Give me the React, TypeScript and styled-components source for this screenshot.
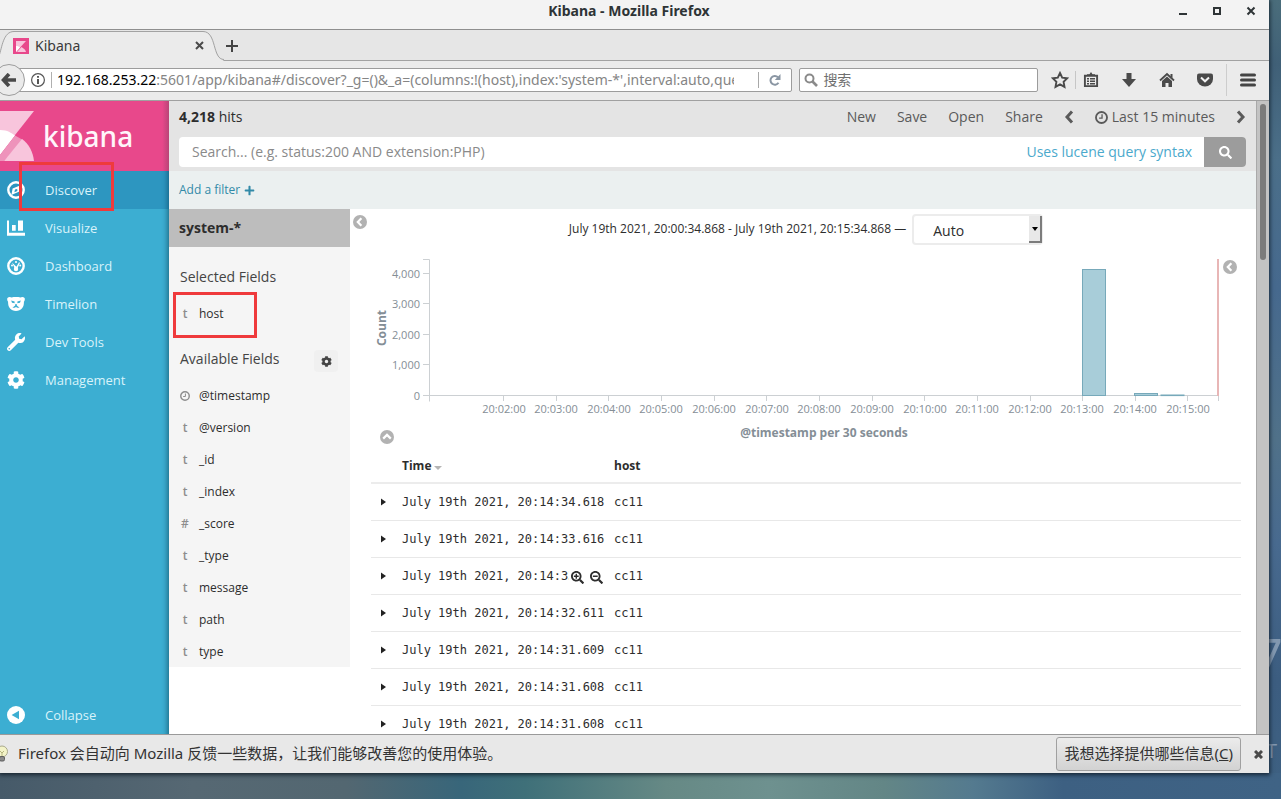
import React from "react";
import styled, { createGlobalStyle, css } from "styled-components";
import {
  FaPlus,
  FaCog,
  FaSearch,
  FaSearchPlus,
  FaSearchMinus,
  FaWrench,
} from "react-icons/fa";

const uiFont = `"Open Sans", "Noto Sans CJK SC", sans-serif`;
const chromeFont = `"Noto Sans", "Noto Sans CJK SC", sans-serif`;

const GlobalStyle = createGlobalStyle`
  * { box-sizing: border-box; }
  body { margin: 0; font-family: ${uiFont}; color: #2d2d2d; }
  button, input, select { font-family: inherit; color: inherit; margin: 0; }
  button { border: 0; background: none; padding: 0; cursor: pointer; }
  a { text-decoration: none; }
  svg { display: block; }
`;

/* ---------- desktop and window ---------- */

const Desktop = styled.div`
  position: relative;
  display: flex;
  height: 100vh;
  padding: 0 12px 26px 0;
  overflow: hidden;
  background:
    linear-gradient(90deg, #465a69 0%, #566873 15%, #536771 27%, #38667a 36%, #3f7079 41%, #668985 52%, #6e918f 60%, #638686 69%, #547a8f 76%, #3d6082 83%, #3f6385 100%)
      bottom / 100% 26px no-repeat,
    linear-gradient(180deg, #4a6d7b 0%, #406077 8%, #4b6f89 20%, #46698e 36%, #507189 55%, #486a8f 68%, #3c5d80 85%, #3e6182 100%);
`;

const DesktopText = styled.span<{ $top: number; $size: number; $right: number }>`
  position: absolute;
  top: ${(p) => p.$top}px;
  right: ${(p) => p.$right}px;
  font: 400 ${(p) => p.$size}px/1 ${uiFont};
  color: #8298b0;
`;

const BrowserWindow = styled.div`
  position: relative;
  display: flex;
  flex: 1;
  flex-direction: column;
  min-width: 0;
  background: #e8e8e8;
  box-shadow: 0 1px 4px 1px rgba(10, 20, 30, 0.75);
`;

const TitleBar = styled.header`
  position: relative;
  display: flex;
  align-items: center;
  justify-content: flex-end;
  height: 30px;
  padding: 0 13px 8px 0;
  background: #f3f3f3;
  border-bottom: 1px solid #8e8e8e;
`;

const WindowTitle = styled.h1`
  flex: 1;
  margin: 0;
  padding-left: 80px;
  text-align: center;
  font: 700 14px/22px ${chromeFont};
  color: #2e3436;
`;

const WindowButtons = styled.div`
  display: flex;
  gap: 24px;
`;

const TabStrip = styled.div`
  display: flex;
  align-items: center;
  height: 31px;
  background: #e6e6e6;
  border-bottom: 1px solid #a2a2a2;
  font: 14px/20px ${chromeFont};
`;

const Tab = styled.div`
  position: relative;
  display: flex;
  align-items: center;
  width: 222px;
  height: 31px;
  padding: 1px 0 0 13px;
  color: #3a3a3a;
`;

const TabShape = styled.svg`
  position: absolute;
  top: 0;
  left: 0;
`;

const TabLabel = styled.span`
  position: relative;
  flex: 1;
  margin-left: 6px;
`;

const TabClose = styled.button`
  position: relative;
  margin-right: 18px;
`;

const Favicon = styled.svg`
  position: relative;
`;

const NewTab = styled.button`
  margin: 1px 0 0 4px;
`;

const NavBar = styled.div`
  display: flex;
  align-items: center;
  height: 40px;
  padding: 0 13px 2px 0;
  background: #ebebeb;
  border-bottom: 1px solid #a0a0a0;
  font: 14px/20px ${chromeFont};
`;

const BackButton = styled.button`
  position: relative;
  display: flex;
  align-items: center;
  justify-content: center;
  width: 32px;
  height: 32px;
  margin: 0 -8px 0 -7px;
  border: 1px solid #9d9d9d;
  border-radius: 50%;
  background: #ebebeb;
`;

const UrlBox = styled.div`
  display: flex;
  flex: 1;
  align-items: center;
  height: 24px;
  min-width: 0;
  padding: 0 9px 0 13px;
  background: #fff;
  border: 1px solid #9c9c9c;
  border-radius: 2px;
`;

const UrlInfo = styled.svg`
  flex: none;
  margin-right: 6px;
`;

const Divider = styled.span<{ $h: number; $c: string }>`
  flex: none;
  width: 1px;
  height: ${(p) => p.$h}px;
  background: ${(p) => p.$c};
`;

const HostLabel = styled.label`
  margin-left: 5px;
  color: #000;
`;

const plainInput = css`
  flex: 1;
  min-width: 0;
  padding: 0;
  border: 0;
  outline: 0;
  background: transparent;
`;

const UrlInput = styled.input`
  ${plainInput}
  height: 22px;
  margin-right: 24px;
  font: inherit;
  color: #858585;
`;

const ReloadButton = styled.button`
  margin-left: 9px;
`;

const BrowserSearch = styled.label`
  display: flex;
  flex: none;
  align-items: center;
  gap: 5px;
  width: 19%;
  max-width: 240px;
  height: 24px;
  margin-left: 7px;
  padding: 0 4px;
  background: #fff;
  border: 1px solid #9c9c9c;
  border-radius: 2px;
`;

const BrowserSearchInput = styled.input`
  ${plainInput}
  font: inherit;
  &::placeholder { color: #6f6f6f; opacity: 1; }
`;

const ToolButtons = styled.div`
  display: flex;
  align-items: center;
  margin-left: 13px;
`;

const ToolButton = styled.button<{ $gap?: number }>`
  margin-right: ${(p) => p.$gap ?? 22}px;
`;

/* ---------- page ---------- */

const Page = styled.div`
  position: relative;
  display: flex;
  flex: 1;
  min-height: 0;
  overflow: hidden;
  background: #fff;
`;

const SideNav = styled.nav`
  display: flex;
  flex: none;
  flex-direction: column;
  width: 169px;
  background: #3caed2;
  box-shadow: inset -6px 0 5px -4px rgba(0, 40, 60, 0.45);
`;

const Brand = styled.div`
  display: flex;
  align-items: center;
  height: 70px;
  background: linear-gradient(90deg, #e8488b 96%, #b94577 100%);
`;

const BrandName = styled.span`
  margin-left: 7px;
  font: 500 28px/40px "Noto Sans", sans-serif;
  color: #fff5fa;
`;

const NavItem = styled.a<{ $active?: boolean; $last?: boolean }>`
  display: flex;
  align-items: center;
  gap: 20px;
  height: 38px;
  margin-top: ${(p) => (p.$last ? "auto" : "0")};
  padding-left: 7px;
  font-size: 13px;
  line-height: 20px;
  color: #d9f3fa;
  background: ${(p) => (p.$active ? "rgba(0, 80, 140, 0.25)" : "transparent")};
  svg { color: #fff; }
`;

const Main = styled.main`
  display: flex;
  flex: 1;
  flex-direction: column;
  min-width: 0;
`;

const TopBar = styled.div`
  flex: none;
  padding: 0 10px 4px;
  background: #e4e4e4;
`;

const MenuRow = styled.div`
  display: flex;
  align-items: center;
  height: 36px;
  padding-bottom: 4px;
  font-size: 14px;
  line-height: 20px;
`;

const Hits = styled.div`
  flex: 1;
`;

const MenuItems = styled.div`
  display: flex;
  align-items: center;
  gap: 21px;
  color: #5a5a5a;
`;

const MenuButton = styled.button`
  display: flex;
  align-items: center;
  gap: 4px;
  font-size: 14px;
  line-height: 20px;
`;

const QueryBar = styled.form`
  display: flex;
  height: 30px;
  border-radius: 4px;
  background: #fff;
  overflow: hidden;
`;

const QueryInput = styled.input`
  ${plainInput}
  padding: 0 0 2px 13px;
  font-size: 14px;
  &::placeholder { color: #8a8a8a; opacity: 1; }
`;

const SyntaxLink = styled.a`
  margin-right: 12px;
  font-size: 14px;
  line-height: 30px;
  color: #4ba9cc;
`;

const QueryButton = styled.button`
  display: flex;
  align-items: center;
  justify-content: center;
  width: 42px;
  background: #9c9c9c;
  color: #fff;
`;

const FilterBar = styled.div`
  display: flex;
  flex: none;
  align-items: center;
  height: 38px;
  padding-left: 10px;
  background: #ebf0f0;
`;

const AddFilter = styled.button`
  display: flex;
  align-items: center;
  gap: 4px;
  font-size: 12px;
  line-height: 20px;
  color: #328aa8;
`;

const Workspace = styled.div`
  display: flex;
  flex: 1;
  align-items: flex-start;
  min-height: 0;
`;

const FieldsPanel = styled.aside`
  flex: none;
  width: 181px;
  background: #f5f5f5;
`;

const IndexPattern = styled.h2`
  margin: 0;
  padding: 0 10px;
  font-size: 14px;
  line-height: 38px;
  background: #bdbdbd;
`;

const FieldsHeading = styled.div`
  display: flex;
  align-items: center;
  height: 50px;
  padding: 10px 12px 0 11px;
  h3 {
    flex: 1;
    margin: 0;
    font-size: 14px;
    font-weight: 400;
    line-height: 20px;
    color: #444;
  }
`;

const SettingsButton = styled.button`
  display: flex;
  align-items: center;
  justify-content: center;
  width: 24px;
  height: 22px;
  margin-top: 4px;
  border-radius: 4px;
  background: #f0f0f0;
  color: #444;
`;

const FieldList = styled.ul`
  margin: 0;
  padding: 0;
  list-style: none;
`;

const Field = styled.li`
  display: flex;
  align-items: center;
  height: 32px;
  padding: 2px 0 0 10px;
  font-size: 12px;
  line-height: 20px;
`;

const FieldType = styled.span`
  display: flex;
  justify-content: center;
  width: 12px;
  margin-right: 8px;
  font-weight: 600;
  color: #8d8d8d;
`;

const Results = styled.section`
  position: relative;
  flex: 1;
  min-width: 0;
  padding: 0 15px 0 21px;
`;

const Round = styled.button`
  display: flex;
  align-items: center;
  justify-content: center;
  width: 14px;
  height: 14px;
  border-radius: 50%;
  background: #b2b2b2;
  color: #fff;
`;

const PanelToggle = styled(Round)<{ $top: number; $side: "left" | "right" }>`
  position: absolute;
  top: ${(p) => p.$top}px;
  ${(p) => (p.$side === "left" ? "left: 3px" : "right: 19px")};
`;

const RangeRow = styled.div`
  display: flex;
  align-items: center;
  justify-content: center;
  gap: 6px;
  height: 41px;
  font-size: 12px;
  line-height: 20px;
`;

const RangeText = styled.span`
  padding-bottom: 2px;
`;

const SelectBox = styled.div`
  position: relative;
  width: 131px;
  height: 31px;
`;

const IntervalSelect = styled.select`
  width: 100%;
  height: 100%;
  padding: 2px 0 0 19px;
  appearance: none;
  border: 2px solid #ececec;
  border-radius: 4px;
  background: #fff;
  font-size: 14px;
`;

const SelectArrow = styled.span`
  position: absolute;
  top: 2px;
  right: 1px;
  display: flex;
  align-items: center;
  justify-content: center;
  width: 13px;
  height: 27px;
  background: #e8e8e8;
  border-right: 2px solid #7c7c7c;
  border-bottom: 2px solid #7c7c7c;
  pointer-events: none;
`;

const Chart = styled.svg`
  width: 100%;
  height: auto;
  font-family: ${uiFont};
  font-size: 11px;
  fill: #848e96;
`;

const ChartFooter = styled.div`
  display: flex;
  align-items: flex-start;
  height: 22px;
  padding-left: 9px;
`;

const CollapseChart = styled(Round)`
  margin-top: 3px;
`;

const AxisTitle = styled.div`
  flex: 1;
  padding-left: 13px;
  text-align: center;
  font-size: 12px;
  font-weight: 700;
  line-height: 12px;
  color: #848e96;
`;

const DocTable = styled.table`
  width: 100%;
  border-collapse: collapse;
  table-layout: fixed;
  th {
    height: 34px;
    padding: 0;
    border-bottom: 2px solid #ececec;
    text-align: left;
    font-size: 12px;
    line-height: 20px;
  }
  td {
    position: relative;
    height: 37px;
    padding: 0;
    border-bottom: 1px solid #e8e8e8;
    font: 12px/20px "DejaVu Sans Mono", monospace;
    white-space: nowrap;
  }
`;

const CaretCol = styled.col`
  width: 31px;
`;

const TimeCol = styled.col`
  width: 212px;
`;

const SortButton = styled.button`
  display: flex;
  align-items: center;
  gap: 3px;
  font: inherit;
`;

const ExpandButton = styled.button`
  display: block;
  margin-left: 10px;
`;

const CellActions = styled.span`
  position: absolute;
  top: 9px;
  right: 7px;
  display: flex;
  align-items: center;
  gap: 6px;
  height: 22px;
  padding: 0 4px 0 2px;
  background: #fff;
`;

const ScrollTrack = styled.div`
  flex: none;
  width: 13px;
  padding: 3px 3px 0 3px;
  background: #c3c3c3;
  border-left: 1px solid #a9a9a9;
`;

const ScrollThumb = styled.div`
  height: 156px;
  border-radius: 3px;
  background: #7b7b7b;
`;

const Marker = styled.div<{ $x: number; $y: number; $w: number; $h: number }>`
  position: absolute;
  left: ${(p) => p.$x}px;
  top: ${(p) => p.$y}px;
  width: ${(p) => p.$w}px;
  height: ${(p) => p.$h}px;
  border: 3px solid #ef3a3c;
  pointer-events: none;
`;

/* ---------- notification bar ---------- */

const NoticeBar = styled.footer`
  display: flex;
  flex: none;
  align-items: center;
  height: 39px;
  padding-right: 6px;
  overflow: hidden;
  background: #e8e8e8;
  border-top: 1px solid #9a9a9a;
  font: 15px/20px ${chromeFont};
  color: #333;
`;

const Bulb = styled.svg`
  margin: 0 9px 0 -5px;
`;

const NoticeText = styled.span`
  flex: 1;
  padding-bottom: 2px;
`;

const NoticeButton = styled.button`
  height: 34px;
  margin-right: 13px;
  padding: 0 7px 2px;
  border: 1px solid #a0a0a0;
  border-radius: 3px;
  background: linear-gradient(#ececec, #d2d2d2);
  font: inherit;
`;

/* ---------- drawings ---------- */

const Cross = ({ size, w, color }: { size: number; w: number; color: string }) => (
  <svg width={size} height={size} viewBox={`0 0 ${size} ${size}`} aria-hidden>
    <path
      d={`M1 1L${size - 1} ${size - 1}M${size - 1} 1L1 ${size - 1}`}
      stroke={color}
      strokeWidth={w}
    />
  </svg>
);

const chevrons = {
  left: "M8 1.5L3 7L8 12.5",
  right: "M2 1.5L7 7L2 12.5",
};

const Chevron = ({ dir }: { dir: "left" | "right" }) => (
  <svg width="10" height="14" viewBox="0 0 10 14" aria-hidden>
    <path d={chevrons[dir]} fill="none" stroke="currentColor" strokeWidth="3" />
  </svg>
);

const RoundChevron = ({ up }: { up?: boolean }) => (
  <svg width="14" height="14" viewBox="0 0 14 14" aria-hidden>
    <path
      d={up ? "M3.2 8.6L7 4.9L10.8 8.6" : "M8.4 3.2L4.8 7L8.4 10.8"}
      fill="none"
      stroke="currentColor"
      strokeWidth="2.2"
    />
  </svg>
);

const Clock = ({ size }: { size: number }) => (
  <svg width={size} height={size} viewBox="0 0 12 12" aria-hidden>
    <circle cx="6" cy="6" r="5.1" fill="none" stroke="currentColor" strokeWidth="1.7" />
    <path d="M6.5 3V6.6H3.8" fill="none" stroke="currentColor" strokeWidth="1.2" />
  </svg>
);

const CompassIcon = () => (
  <svg width="18" height="18" viewBox="0 0 18 18" aria-hidden>
    <circle cx="9" cy="9" r="7.7" fill="none" stroke="currentColor" strokeWidth="2.4" />
    <path fillRule="evenodd" fill="currentColor" d="M13.6 4.2L12.4 10.6L4.4 14L5.6 7.6ZM8 8.4L7.4 11.2L10.4 9.9L10.2 8Z" />
  </svg>
);

const BarsIcon = () => (
  <svg width="18" height="18" viewBox="0 0 18 18" fill="currentColor" aria-hidden>
    <path d="M0 1.5H2V13.7H18V16.7H0ZM5 6H8.7V11.8H5ZM11 1.5H16V11.8H11Z" />
  </svg>
);

const DashIcon = () => (
  <svg width="18" height="18" viewBox="0 0 18 18" aria-hidden>
    <circle cx="9" cy="9" r="7.7" fill="none" stroke="currentColor" strokeWidth="2.4" />
    <g fill="currentColor">
      <circle cx="9" cy="5" r="1.1" />
      <circle cx="5" cy="8.6" r="1" />
      <circle cx="13.2" cy="8.6" r="1" />
      <circle cx="9" cy="12" r="2.2" />
      <path d="M5 5.4L10.2 10.4L8 12ZM12 5.2L13 5.8L10.4 11.6L9 10.6Z" />
    </g>
  </svg>
);

const TimelionIcon = () => (
  <svg width="18" height="16" viewBox="0 0 18 16" aria-hidden>
    <path fill="currentColor" d="M.4 2C1.6 .6 3.6 .8 4.6 1.5C7 .9 11 .9 13.4 1.5C14.4 .8 16.4 .6 17.6 2C18.2 3.6 17.6 5 16.9 5.8C17.2 11.2 14.5 15 9 15S.8 11.2 1.1 5.8C.4 5 -.2 3.6 .4 2Z" />
    <path fill="#3caed2" d="M4.2 4.6L7.6 5.6V7.2L5 6.8ZM13.8 4.6L10.4 5.6V7.2L13 6.8ZM8 8.2H10L9.8 9.6L12.6 11.8H10.4L9 11L7.6 11.8H5.4L8.2 9.6Z" />
  </svg>
);

const CollapseIcon = () => (
  <svg width="18" height="18" viewBox="0 0 18 18" aria-hidden>
    <circle cx="9" cy="9" r="9" fill="currentColor" />
    <path fill="#3caed2" d="M4.6 9L12 4.8V13.2Z" />
  </svg>
);

const BrandMark = () => (
  <svg width="36" height="70" viewBox="0 0 36 70" aria-hidden>
    <path fill="#f8c5dc" d="M0 10H34L0 53Z" />
    <path fill="#fff" d="M0 29C8 29 11 32 15 34.5L0 54Z" />
    <path fill="#ee93bb" d="M15 34.5L23 39L4 60H0V54Z" />
    <path fill="#f8c5dc" d="M22 38C29 43 33 51 34 60H4Z" />
  </svg>
);

/* ---------- chart ---------- */

const yLabels = ["4,000", "3,000", "2,000", "1,000", "0"];
const xLabels = [
  "20:02:00", "20:03:00", "20:04:00", "20:05:00", "20:06:00", "20:07:00", "20:08:00",
  "20:09:00", "20:10:00", "20:11:00", "20:12:00", "20:13:00", "20:14:00", "20:15:00",
];

const Histogram = () => (
  <Chart viewBox="0 0 870 177" role="img" aria-label="Count of hits over time">
    <text transform="translate(15 78) rotate(-90)" textAnchor="middle" fontSize="12" fontWeight="700">
      Count
    </text>
    <g stroke="#ccd0d3" fill="none">
      <path d="M52 9.5H58.5V151.5M52 145.5H847.5V151" />
      {yLabels.map((l, i) => (
        <path key={l} d={`M52 ${Math.round(24 + i * 30.4) - 0.5}H58`} />
      ))}
      {xLabels.map((l, i) => (
        <path key={l} d={`M${Math.round(132 + i * 52.65) + 0.5} 146V151`} />
      ))}
    </g>
    {yLabels.map((l, i) => (
      <text key={l} x="49" y={Math.round(28 + i * 30.4)} textAnchor="end">
        {l}
      </text>
    ))}
    {xLabels.map((l, i) => (
      <text key={l} x={Math.round(132.5 + i * 52.63)} y="163" textAnchor="middle">
        {l}
      </text>
    ))}
    <g fill="#a8cdd9" stroke="#77a9ba">
      <rect x="711.5" y="19.5" width="23" height="126" />
      <rect x="763.5" y="143.5" width="23" height="2" />
      <rect x="790" y="145" width="23" height="0.6" />
    </g>
    <path d="M847 9V146" stroke="#e8b6b6" strokeWidth="2" />
  </Chart>
);

/* ---------- data ---------- */

const navItems: { label: string; icon: React.ReactNode; active?: boolean }[] = [
  { label: "Discover", icon: <CompassIcon />, active: true },
  { label: "Visualize", icon: <BarsIcon /> },
  { label: "Dashboard", icon: <DashIcon /> },
  { label: "Timelion", icon: <TimelionIcon /> },
  { label: "Dev Tools", icon: <FaWrench size={18} /> },
  { label: "Management", icon: <FaCog size={18} /> },
];

const fields: [string, string][] = [
  ["clock", "@timestamp"],
  ["t", "@version"],
  ["t", "_id"],
  ["t", "_index"],
  ["#", "_score"],
  ["t", "_type"],
  ["t", "message"],
  ["t", "path"],
  ["t", "type"],
];

const times = ["34.618", "33.616", "33.614", "32.611", "31.609", "31.608", "31.608"];

export default function App() {
  return (
    <Desktop>
      <GlobalStyle />
      <DesktopText $top={630} $size={52} $right={-2}>7</DesktopText>
      <DesktopText $top={741} $size={20} $right={4}>T</DesktopText>
      <BrowserWindow>
        <TitleBar>
          <WindowTitle>Kibana - Mozilla Firefox</WindowTitle>
          <WindowButtons>
            <button aria-label="Minimize">
              <svg width="10" height="10"><rect x="1" y="7" width="8" height="2" fill="#2e3436" /></svg>
            </button>
            <button aria-label="Maximize">
              <svg width="10" height="10"><rect x="2" y="2" width="6" height="6" fill="none" stroke="#2e3436" strokeWidth="2" /></svg>
            </button>
            <button aria-label="Close window">
              <svg width="10" height="10"><path d="M1.5 1.5L8.5 8.5M8.5 1.5L1.5 8.5" stroke="#2e3436" strokeWidth="2" /></svg>
            </button>
          </WindowButtons>
        </TitleBar>

        <TabStrip>
          <Tab>
            <TabShape width="224" height="31" viewBox="0 0 224 31" aria-hidden>
              <path
                d="M-2 28C2 20 2 2 14 2H203C216 2 213 29.5 222 29.5L224 31H-2Z"
                fill="#ebebeb"
              />
              <path d="M-1 26C2 18 3 1.5 14 1.5H203C217 1.5 212 29.5 224 29.5" fill="none" stroke="#a2a2a2" />
            </TabShape>
            <Favicon width="16" height="16" viewBox="0 0 16 16" aria-hidden>
              <rect width="16" height="16" fill="#e8488b" />
              <path d="M3 3H13L3 14Z" fill="#f8c5dc" />
              <path d="M3 8C5 8 6 8.5 7 9.5L3 14Z" fill="#fff" />
              <path d="M8.5 9C11 10.5 12.5 12 13 14H4Z" fill="#f8c5dc" />
            </Favicon>
            <TabLabel>Kibana</TabLabel>
            <TabClose aria-label="Close tab"><Cross size={9} w={2} color="#4a4a4a" /></TabClose>
          </Tab>
          <NewTab aria-label="New tab">
            <svg width="12" height="12"><path d="M6 0V12M0 6H12" stroke="#444" strokeWidth="2" /></svg>
          </NewTab>
        </TabStrip>

        <NavBar>
          <BackButton aria-label="Back">
            <svg width="16" height="14" viewBox="0 0 16 14">
              <path d="M8 1L2.5 7L8 13M3 7H15" fill="none" stroke="#4a4a4a" strokeWidth="3.6" />
            </svg>
          </BackButton>
          <UrlBox>
            <UrlInfo width="14" height="14" viewBox="0 0 14 14" aria-hidden>
              <circle cx="7" cy="7" r="6.4" fill="none" stroke="#555" strokeWidth="1.2" />
              <path d="M7 3V4.8M7 6V11" stroke="#444" strokeWidth="1.8" />
            </UrlInfo>
            <Divider $h={16} $c="#b0b0b0" />
            <HostLabel htmlFor="url">192.168.253.22</HostLabel>
            <UrlInput
              id="url"
              readOnly
              value=":5601/app/kibana#/discover?_g=()&_a=(columns:!(host),index:'system-*',interval:auto,query:"
            />
            <Divider $h={16} $c="#a8a8a8" />
            <ReloadButton aria-label="Reload">
              <svg width="14" height="14" viewBox="0 0 14 14">
                <path d="M10.5 9.8A4.4 4.4 0 1 1 10 4.2" fill="none" stroke="#8a96a3" strokeWidth="2" />
                <path d="M12.5 1V7H6.8Z" fill="#8a96a3" />
              </svg>
            </ReloadButton>
          </UrlBox>
          <BrowserSearch>
            <svg width="14" height="14" viewBox="0 0 14 14" aria-hidden>
              <circle cx="5.5" cy="5.5" r="4" fill="none" stroke="#8a8a8a" strokeWidth="2" />
              <path d="M8.5 8.5L13 13" stroke="#8a8a8a" strokeWidth="2.6" />
            </svg>
            <BrowserSearchInput placeholder="搜索" aria-label="搜索" />
          </BrowserSearch>
          <ToolButtons>
            <ToolButton $gap={6} aria-label="Bookmark">
              <svg width="18" height="18" viewBox="0 0 18 18">
                <path d="M9 2L11.2 6.6L16.2 7.3L12.6 10.8L13.5 15.9L9 13.4L4.5 15.9L5.4 10.8L1.8 7.3L6.8 6.6Z" fill="none" stroke="#4a4a4a" strokeWidth="1.9" />
              </svg>
            </ToolButton>
            <Divider $h={18} $c="#c6c6c6" />
            <ToolButton aria-label="Library">
              <svg width="23" height="16" viewBox="-7 0 23 16">
                <path d="M1.9 3.8H14.1V14.1H1.9Z" fill="none" stroke="#4a4a4a" strokeWidth="1.9" />
                <path d="M4 4V2.2H6.5L8 0L9.5 2.2H12V4ZM4 6H6V7.4H4ZM7 6H12V7.4H7ZM4 8.5H6V9.9H4ZM7 8.5H12V9.9H7ZM4 11H6V12.4H4ZM7 11H12V12.4H7Z" fill="#4a4a4a" />
              </svg>
            </ToolButton>
            <ToolButton aria-label="Downloads">
              <svg width="16" height="16" viewBox="0 0 16 16">
                <path d="M5.5 1H10.5V7H15L8 15L1 7H5.5Z" fill="#4a4a4a" />
              </svg>
            </ToolButton>
            <ToolButton aria-label="Home">
              <svg width="16" height="16" viewBox="0 0 16 16">
                <path d="M1 8.5L8 2L15 8.5" fill="none" stroke="#4a4a4a" strokeWidth="1.8" />
                <path d="M11.5 2H13.5V6L11.5 4.5ZM3 9L8 4.5L13 9V15H9.5V11H6.5V15H3Z" fill="#4a4a4a" />
              </svg>
            </ToolButton>
            <ToolButton $gap={13} aria-label="Pocket">
              <svg width="16" height="16" viewBox="0 0 16 16">
                <path d="M2 1.5H14Q16 1.5 16 3.5V7A8 7.5 0 0 1 0 7V3.5Q0 1.5 2 1.5Z" fill="#4a4a4a" />
                <path d="M4 5.5L8 9.3L12 5.5" fill="none" stroke="#f3f3f3" strokeWidth="2" />
              </svg>
            </ToolButton>
            <Divider $h={32} $c="#cdcdcd" />
            <ToolButton $gap={0} aria-label="Menu">
              <svg width="29" height="16" viewBox="-13 0 29 16">
                <path d="M1.5 3H14.5M1.5 8H14.5M1.5 13H14.5" stroke="#444" strokeWidth="3" strokeLinecap="round" />
              </svg>
            </ToolButton>
          </ToolButtons>
        </NavBar>

        <Page>
          <SideNav>
            <Brand>
              <BrandMark />
              <BrandName>kibana</BrandName>
            </Brand>
            {navItems.map((n) => (
              <NavItem key={n.label} href="#" $active={n.active}>
                {n.icon}
                {n.label}
              </NavItem>
            ))}
            <NavItem href="#" $last>
              <CollapseIcon />
              Collapse
            </NavItem>
          </SideNav>

          <Main>
            <TopBar>
              <MenuRow>
                <Hits><strong>4,218</strong> hits</Hits>
                <MenuItems>
                  <MenuButton>New</MenuButton>
                  <MenuButton>Save</MenuButton>
                  <MenuButton>Open</MenuButton>
                  <MenuButton>Share</MenuButton>
                  <MenuButton aria-label="Earlier"><Chevron dir="left" /></MenuButton>
                  <MenuButton><Clock size={13} />Last 15 minutes</MenuButton>
                  <MenuButton aria-label="Later"><Chevron dir="right" /></MenuButton>
                </MenuItems>
              </MenuRow>
              <QueryBar onSubmit={(e) => e.preventDefault()}>
                <QueryInput
                  aria-label="Search"
                  placeholder="Search... (e.g. status:200 AND extension:PHP)"
                />
                <SyntaxLink href="#">Uses lucene query syntax</SyntaxLink>
                <QueryButton aria-label="Run search"><FaSearch size={13} /></QueryButton>
              </QueryBar>
            </TopBar>
            <FilterBar>
              <AddFilter>Add a filter <FaPlus size={11} /></AddFilter>
            </FilterBar>

            <Workspace>
              <FieldsPanel>
                <IndexPattern>system-*</IndexPattern>
                <FieldsHeading><h3>Selected Fields</h3></FieldsHeading>
                <FieldList>
                  <Field><FieldType>t</FieldType>host</Field>
                </FieldList>
                <FieldsHeading>
                  <h3>Available Fields</h3>
                  <SettingsButton aria-label="Field settings"><FaCog size={11} /></SettingsButton>
                </FieldsHeading>
                <FieldList>
                  {fields.map(([type, name]) => (
                    <Field key={name}>
                      <FieldType>{type === "clock" ? <Clock size={10} /> : type}</FieldType>
                      {name}
                    </Field>
                  ))}
                </FieldList>
              </FieldsPanel>

              <Results>
                <PanelToggle $top={6} $side="left" aria-label="Hide fields"><RoundChevron /></PanelToggle>
                <PanelToggle $top={51} $side="right" aria-label="Show legend"><RoundChevron /></PanelToggle>
                <RangeRow>
                  <RangeText>July 19th 2021, 20:00:34.868 - July 19th 2021, 20:15:34.868 —</RangeText>
                  <SelectBox>
                    <IntervalSelect aria-label="Interval" defaultValue="Auto">
                      <option>Auto</option>
                    </IntervalSelect>
                    <SelectArrow>
                      <svg width="6" height="4"><path d="M0 0H6L3 4Z" fill="#000" /></svg>
                    </SelectArrow>
                  </SelectBox>
                </RangeRow>
                <Histogram />
                <ChartFooter>
                  <CollapseChart aria-label="Collapse chart"><RoundChevron up /></CollapseChart>
                  <AxisTitle>@timestamp per 30 seconds</AxisTitle>
                </ChartFooter>
                <DocTable>
                  <colgroup><CaretCol /><TimeCol /><col /></colgroup>
                  <thead>
                    <tr>
                      <th aria-label="Expand" />
                      <th>
                        <SortButton>
                          Time
                          <svg width="8" height="10"><path d="M0 5H8L4 9Z" fill="#b5b5b5" /></svg>
                        </SortButton>
                      </th>
                      <th>host</th>
                    </tr>
                  </thead>
                  <tbody>
                    {times.map((t, i) => (
                      <tr key={i}>
                        <td>
                          <ExpandButton aria-label="Expand row">
                            <svg width="5" height="8"><path d="M0 0.5L5 4L0 7.5Z" fill="#222" /></svg>
                          </ExpandButton>
                        </td>
                        <td>
                          July 19th 2021, 20:14:{t}
                          {i === 2 && (
                            <CellActions>
                              <button aria-label="Filter for value"><FaSearchPlus size={13} /></button>
                              <button aria-label="Filter out value"><FaSearchMinus size={13} /></button>
                            </CellActions>
                          )}
                        </td>
                        <td>cc11</td>
                      </tr>
                    ))}
                  </tbody>
                </DocTable>
              </Results>
            </Workspace>
          </Main>

          <ScrollTrack><ScrollThumb /></ScrollTrack>
          <Marker $x={19} $y={61} $w={95} $h={49} />
          <Marker $x={173} $y={191} $w={84} $h={46} />
        </Page>

        <NoticeBar>
          <Bulb width="14" height="18" viewBox="0 0 14 18" aria-hidden>
            <circle cx="7" cy="6.5" r="5.5" fill="#f3f3c8" stroke="#a9a98c" />
            <path d="M5 6L7 8L9 6M7 8V12" fill="none" stroke="#b5b57e" />
            <rect x="4.5" y="11.5" width="5" height="4.5" rx="1.5" fill="#8a8a8a" stroke="#5e5e5e" />
          </Bulb>
          <NoticeText>Firefox 会自动向 Mozilla 反馈一些数据，让我们能够改善您的使用体验。</NoticeText>
          <NoticeButton>我想选择提供哪些信息(<u>C</u>)</NoticeButton>
          <button aria-label="Dismiss"><Cross size={9} w={3} color="#4a4a4a" /></button>
        </NoticeBar>
      </BrowserWindow>
    </Desktop>
  );
}
